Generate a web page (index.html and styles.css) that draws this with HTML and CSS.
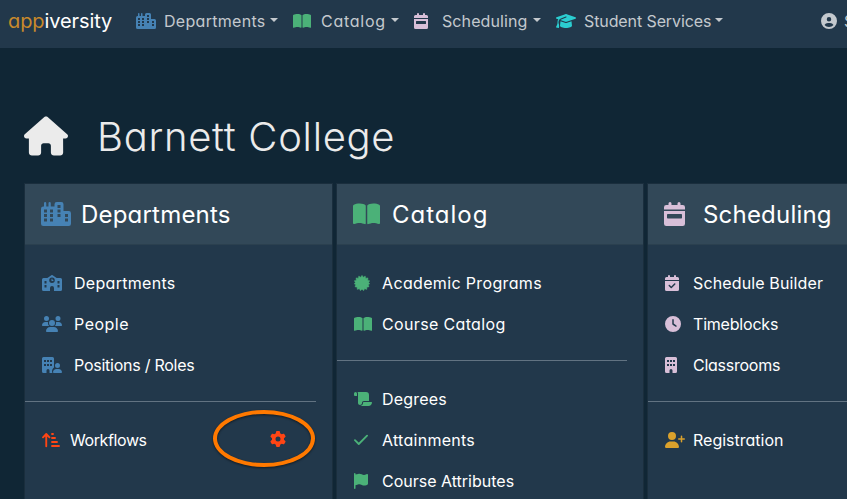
FILE: index.html
```html
<!DOCTYPE html>
<html lang="en">
<head>
<meta charset="utf-8">
<title>appiversity</title>
<link rel="stylesheet" href="styles.css">
</head>
<body>
<svg class="defs" aria-hidden="true">
  <symbol id="city" viewBox="0 0 640 512"><path fill-rule="evenodd" d="M64 24a24 24 0 0 1 48 0v72h48V24a24 24 0 0 1 48 0v72h80V48a48 48 0 0 1 48-48h96a48 48 0 0 1 48 48v144h112a48 48 0 0 1 48 48v224a48 48 0 0 1-48 48H48a48 48 0 0 1-48-48V144a48 48 0 0 1 48-48h16zM64 160v64h64v-64zM192 160v64h64v-64zM64 256v64h64v-64zM192 256v64h64v-64zM64 352v64h64v-64zM192 352v64h64v-64zM352 64v64h64V64zM352 160v64h64v-64zM352 256v64h64v-64zM512 256v64h64v-64zM512 352v64h64v-64z"/></symbol>
  <symbol id="book" viewBox="0 0 576 512"><path d="M249.6 471.5c10.8 3.8 22.4-4.1 22.4-15.5V78.6c0-4.2-1.6-8.4-5-11C247.4 52 202.4 32 144 32C93.5 32 46.3 45.3 18.1 56.1C6.8 60.5 0 71.7 0 83.8V454.1c0 11.9 12.8 20.2 24.1 16.5C55.6 460.1 105.5 448 144 448c33.9 0 79 14 105.6 23.5zm76.8 0C353 462 398.1 448 432 448c38.5 0 88.4 12.1 119.9 22.6c11.3 3.8 24.1-4.6 24.1-16.5V83.8c0-12.1-6.8-23.3-18.1-27.6C529.7 45.3 482.5 32 432 32c-58.4 0-103.4 20-123 35.6c-3.3 2.6-5 6.8-5 11V456c0 11.4 11.7 19.3 22.4 15.5z"/></symbol>
  <symbol id="calendar" viewBox="0 0 448 512"><path fill-rule="evenodd" d="M96 32a32 32 0 0 1 64 0v32h128V32a32 32 0 0 1 64 0v32h48a48 48 0 0 1 48 48v48H0v-48a48 48 0 0 1 48-48h48zM0 192h448v272a48 48 0 0 1-48 48H48a48 48 0 0 1-48-48zM80 256a16 16 0 0 0-16 16v64a16 16 0 0 0 16 16h288a16 16 0 0 0 16-16v-64a16 16 0 0 0-16-16z"/></symbol>
  <symbol id="calcheck" viewBox="0 0 448 512"><path fill-rule="evenodd" d="M96 32a32 32 0 0 1 64 0v32h128V32a32 32 0 0 1 64 0v32h48a48 48 0 0 1 48 48v48H0v-48a48 48 0 0 1 48-48h48zM0 192h448v272a48 48 0 0 1-48 48H48a48 48 0 0 1-48-48zM329 305c9.400-9.400 9.400-24.600 0-33.900s-24.600-9.400-33.900 0l-95 95-47-47c-9.400-9.400-24.600-9.400-33.900 0s-9.400 24.600 0 33.900l64 64c9.400 9.400 24.600 9.400 33.900 0z"/></symbol>
  <symbol id="grad" viewBox="0 0 640 512"><path d="M320 32c-8.100 0-16.100 1.400-23.700 4.100L15.800 137.400C6.300 140.900 0 149.900 0 160s6.300 19.100 15.800 22.600l57.900 20.900C57.300 229.300 48 259.800 48 291.900v28.100c0 28.400-10.800 57.700-22.300 80.800-6.500 13-13.900 25.800-22.500 37.600C0 442.700-.9 448.300.9 453.400s6 8.900 11.200 10.200l64 16c4.200 1.100 8.700.3 12.400-2s6.300-6.100 7.100-10.400c8.600-42.800 4.300-81.200-2.100-108.700C90.300 344.300 86 329.800 80 316.500v-24.600c0-30.200 10.200-58.700 27.900-81.500 12.900-15.500 29.600-28 49.200-35.700l157-61.700c8.200-3.200 17.500.8 20.700 9s-.8 17.500-9 20.700l-157 61.700c-12.400 4.900-23.300 12.400-32.200 21.600l159.600 57.600c7.600 2.700 15.600 4.100 23.700 4.100s16.100-1.400 23.700-4.100L624.200 182.600c9.500-3.400 15.800-12.500 15.800-22.600s-6.300-19.100-15.800-22.600L343.700 36.100C336.100 33.400 328.100 32 320 32zM128 408c0 35.300 86 72 192 72s192-36.700 192-72L496.700 262.600 354.500 314c-11.100 4-22.800 6-34.500 6s-23.500-2-34.500-6L143.300 262.600z"/></symbol>
  <symbol id="user" viewBox="0 0 512 512"><path fill-rule="evenodd" d="M399 384.200C376.900 345.800 335.400 320 288 320h-64c-47.400 0-88.900 25.800-111 64.200 35.200 39.200 86.200 63.800 143 63.800s107.800-24.700 143-63.800zM0 256a256 256 0 1 1 512 0 256 256 0 1 1-512 0zm256 16a72 72 0 1 0 0-144 72 72 0 1 0 0 144z"/></symbol>
  <symbol id="house" viewBox="0 0 576 512"><path d="M575.800 255.500c0 18-15 32.100-32 32.100h-32l.7 160.200V472c0 22.100-17.900 40-40 40H392c-22.100 0-40-17.900-40-40v-88c0-17.700-14.300-32-32-32h-64c-17.700 0-32 14.300-32 32v88c0 22.100-17.900 40-40 40h-80c-22.100 0-40-17.900-40-40V287.600H32c-18 0-32-14-32-32.100 0-9 3-17 10-24L266.400 8c7-7 15-8 22-8s15 2 21 7l255.400 224.500c8 7 12 15 11 24z"/></symbol>
  <symbol id="school" viewBox="0 0 640 512"><path fill-rule="evenodd" d="M320 0c8 0 14 2 20 6l129 90h123a48 48 0 0 1 48 48v320a48 48 0 0 1-48 48H384v-96a64 64 0 0 0-128 0v96H48a48 48 0 0 1-48-48V144a48 48 0 0 1 48-48h123L300 6c6-4 12-6 20-6zM80 192v80h64v-80zM80 320v80h64v-80zM496 192v80h64v-80zM496 320v80h64v-80zM320 80a88 88 0 1 0 0 176 88 88 0 1 0 0-176zM304 120h32v40h28v32h-60z"/></symbol>
  <symbol id="users" viewBox="0 0 640 512"><path d="M144 0a80 80 0 1 1 0 160 80 80 0 1 1 0-160zM512 0a80 80 0 1 1 0 160 80 80 0 1 1 0-160zM0 299c0-59 48-107 107-107h42c16 0 31 4 45 10-9 72 15 100 41 118H21c-12 0-21-9-21-21zM405 320c42-31 46-78 41-118 14-7 29-10 45-10h42c59 0 107 48 107 107 0 12-9 21-21 21zM320 128a96 96 0 1 1 0 192 96 96 0 1 1 0-192zM128 485c0-74 60-133 133-133h118c73 0 133 60 133 133 0 15-12 27-27 27H155c-15 0-27-12-27-27z"/></symbol>
  <symbol id="builduser" viewBox="0 0 640 512"><path fill-rule="evenodd" d="M48 0h288a48 48 0 0 1 48 48v288c-40 30-64 76-64 128 0 18 6 34 16 48h-96v-80a48 48 0 0 0-96 0v80H48a48 48 0 0 1-48-48V48A48 48 0 0 1 48 0zM64 96v64h64V96zM160 96v64h64V96zM256 96v64h64V96zM64 224v64h64v-64zM160 224v64h64v-64zM256 224v64h64v-64zM496 192a80 80 0 1 1 0 160 80 80 0 1 1 0-160zM352 485c0-58 48-101 107-101h74c59 0 107 43 107 101 0 15-12 27-27 27H379c-15 0-27-12-27-27z"/></symbol>
  <symbol id="sort" viewBox="0 0 576 512"><path d="M32 170L136 64l104 106M136 70v386M320 64h32M320 192h96M320 320h160M320 448h224" fill="none" stroke="currentColor" stroke-width="60" stroke-linecap="round" stroke-linejoin="round"/></symbol>
  <symbol id="gear" viewBox="0 0 512 512"><path fill-rule="evenodd" d="M495.900 166.600c3.200 8.700.5 18.400-6.400 24.600l-43.300 39.400c1.100 8.300 1.700 16.800 1.700 25.400s-.6 17.100-1.700 25.400l43.300 39.400c6.900 6.200 9.600 15.900 6.400 24.600-4.400 11.900-9.700 23.300-15.800 34.300l-4.700 8.100c-6.600 11-14 21.400-22.100 31.200-5.900 7.200-15.700 9.600-24.500 6.800l-55.700-17.700c-13.400 10.300-28.200 18.900-44 25.400l-12.500 57.100c-2 9.100-9 16.300-18.200 17.800-13.800 2.300-28 3.500-42.500 3.500s-28.700-1.200-42.500-3.500c-9.200-1.500-16.200-8.700-18.200-17.800l-12.500-57.100c-15.800-6.500-30.600-15.100-44-25.400L83.100 425.900c-8.800 2.800-18.600.3-24.500-6.800-8.100-9.800-15.500-20.200-22.100-31.200l-4.700-8.100c-6.100-11-11.400-22.400-15.800-34.300-3.200-8.700-.5-18.400 6.400-24.600l43.300-39.400C64.600 273.100 64 264.600 64 256s.6-17.100 1.700-25.400L22.400 191.200c-6.900-6.200-9.600-15.900-6.400-24.600 4.400-11.900 9.700-23.300 15.800-34.300l4.700-8.100c6.600-11 14-21.400 22.100-31.200 5.900-7.200 15.700-9.600 24.500-6.800l55.700 17.700c13.400-10.300 28.200-18.900 44-25.400l12.500-57.100c2-9.100 9-16.300 18.200-17.800C227.300 1.200 241.500 0 256 0s28.700 1.200 42.500 3.500c9.200 1.500 16.200 8.700 18.200 17.800l12.500 57.100c15.800 6.500 30.600 15.100 44 25.400l55.700-17.700c8.800-2.800 18.600-.3 24.500 6.800 8.100 9.800 15.500 20.200 22.100 31.200l4.700 8.100c6.100 11 11.400 22.400 15.800 34.300zM256 336a80 80 0 1 0 0-160 80 80 0 1 0 0 160z"/></symbol>
  <symbol id="seal" viewBox="0 0 512 512"><path d="M256 10l42 60 60-40 18 70 72-8-8 72 64 18-34 60 36 38-48 32 24 66-70 10-2 72-70-20-32 62-52-48-52 48-32-62-70 20-2-72-70-10 24-66-48-32 36-38-34-60 64-18-8-72 72 8 18-70 60 40z" stroke="currentColor" stroke-width="14" stroke-linejoin="round"/></symbol>
  <symbol id="scroll" viewBox="0 0 576 512"><path d="M0 80v48a32 32 0 0 0 32 32h64V80a48 48 0 1 0-96 0zM112 32c10 13 16 30 16 48v304c0 35 29 64 64 64s64-29 64-64v-5a59 59 0 0 1 59-59h165V128a96 96 0 0 0-96-96zM464 480c62 0 112-50 112-112a16 16 0 0 0-16-16H315a27 27 0 0 0-27 27v5c0 53-43 96-96 96z"/></symbol>
  <symbol id="check" viewBox="0 0 448 512"><path d="M30 262l122 122L418 118" fill="none" stroke="currentColor" stroke-width="58" stroke-linecap="round" stroke-linejoin="round"/></symbol>
  <symbol id="flag" viewBox="0 0 448 512"><path d="M48 24a24 24 0 0 0-48 0v464a24 24 0 0 0 48 0V388l80-20c41-10 85-5 123 13 44 22 95 25 142 7l35-13c12-5 20-16 20-30V66c0-23-24-38-45-28l-10 5c-46 23-101 23-147 0-35-18-75-22-113-13L48 48z"/></symbol>
  <symbol id="clock" viewBox="0 0 512 512"><path fill-rule="evenodd" d="M256 0a256 256 0 1 1 0 512 256 256 0 1 1 0-512zM232 120v136c0 8 4 15.500 10.700 20l96 64c11 7.400 25.900 4.400 33.300-6.700s4.400-25.900-6.700-33.300L280 243.200V120a24 24 0 0 0-48 0z"/></symbol>
  <symbol id="building" viewBox="0 0 384 512"><path fill-rule="evenodd" d="M48 0h288a48 48 0 0 1 48 48v416a48 48 0 0 1-48 48h-96v-80a48 48 0 0 0-96 0v80H48a48 48 0 0 1-48-48V48A48 48 0 0 1 48 0zM64 96v64h64V96zM160 96v64h64V96zM256 96v64h64V96zM64 224v64h64v-64zM160 224v64h64v-64zM256 224v64h64v-64z"/></symbol>
  <symbol id="userplus" viewBox="0 0 640 512"><path d="M224 0a128 128 0 1 1 0 256 128 128 0 1 1 0-256zM0 482c0-98 80-178 178-178h92c98 0 178 80 178 178 0 17-13 30-30 30H30c-17 0-30-13-30-30zM504 312v-64h-64a24 24 0 0 1 0-48h64v-64a24 24 0 0 1 48 0v64h64a24 24 0 0 1 0 48h-64v64a24 24 0 0 1-48 0z"/></symbol>
</svg>

<nav class="navbar">
  <a class="brand"><span>app</span>iversity</a>
  <a class="nav-item nav-dept"><svg class="icon w20 blue"><use href="#city"/></svg><span class="label">Departments</span><i class="caret"></i></a>
  <a class="nav-item nav-cat"><svg class="icon w18 green"><use href="#book"/></svg><span class="label">Catalog</span><i class="caret"></i></a>
  <a class="nav-item nav-sched"><svg class="icon w14 pink"><use href="#calendar"/></svg><span class="label">Scheduling</span><i class="caret"></i></a>
  <a class="nav-item nav-stud"><svg class="icon w20 cyan"><use href="#grad"/></svg><span class="label">Student Services</span><i class="caret"></i></a>
  <a class="nav-item nav-user"><svg class="icon w16"><use href="#user"/></svg><span class="label">S</span></a>
</nav>

<main>
  <h1><svg class="house"><use href="#house"/></svg><span>Barnett College</span></h1>
  <div class="cards">
    <section class="card">
      <h2><svg class="head-icon w30 blue"><use href="#city"/></svg><span class="t-dept">Departments</span></h2>
      <div class="card-body">
        <a class="row"><span class="slot"><svg class="icon w20 blue"><use href="#school"/></svg></span><span class="r-dept">Departments</span></a>
        <a class="row"><span class="slot"><svg class="icon w20 blue"><use href="#users"/></svg></span><span class="r-people">People</span></a>
        <a class="row"><span class="slot"><svg class="icon w20 blue"><use href="#builduser"/></svg></span><span class="r-pos">Positions / Roles</span></a>
        <hr>
        <a class="row workflows"><span class="slot"><svg class="icon w18 red"><use href="#sort"/></svg></span><span class="r-work">Workflows</span>
          <span class="settings"><svg class="icon w16 red"><use href="#gear"/></svg><i class="ring"></i></span></a>
      </div>
    </section>
    <section class="card catalog">
      <h2><svg class="head-icon w27 green"><use href="#book"/></svg><span class="t-cat">Catalog</span></h2>
      <div class="card-body">
        <a class="row"><span class="slot"><svg class="icon w16 green"><use href="#seal"/></svg></span><span class="r-acad">Academic Programs</span></a>
        <a class="row"><span class="slot"><svg class="icon w18 green"><use href="#book"/></svg></span><span class="r-course">Course Catalog</span></a>
        <hr>
        <a class="row"><span class="slot"><svg class="icon w18 green"><use href="#scroll"/></svg></span><span class="r-deg">Degrees</span></a>
        <a class="row"><span class="slot"><svg class="icon w14 green"><use href="#check"/></svg></span><span class="r-att">Attainments</span></a>
        <a class="row"><span class="slot"><svg class="icon w14 green"><use href="#flag"/></svg></span><span class="r-attr">Course Attributes</span></a>
      </div>
    </section>
    <section class="card scheduling">
      <h2><svg class="head-icon w21 pink"><use href="#calendar"/></svg><span class="t-sched">Scheduling</span></h2>
      <div class="card-body">
        <a class="row"><span class="slot"><svg class="icon w14 pink"><use href="#calcheck"/></svg></span><span class="r-build">Schedule Builder</span></a>
        <a class="row"><span class="slot"><svg class="icon w16 pink"><use href="#clock"/></svg></span><span class="r-time">Timeblocks</span></a>
        <a class="row"><span class="slot"><svg class="icon w12 pink"><use href="#building"/></svg></span><span class="r-class">Classrooms</span></a>
        <hr>
        <a class="row"><span class="slot"><svg class="icon w20 gold"><use href="#userplus"/></svg></span><span class="r-reg">Registration</span></a>
      </div>
    </section>
  </div>
</main>
</body>
</html>
```
FILE: styles.css
```css
* { box-sizing: border-box; }
html, body { height: 100%; }
body {
  margin: 0;
  overflow: hidden;
  background: #102635;
  color: #fff;
  font: 400 16px/24px "Century Gothic", Inter, "Open Sans", sans-serif;
  font-feature-settings: "cv11" 1;
  white-space: nowrap;
}
.defs { display: none; }
svg { fill: currentColor; flex: none; display: block; }
.icon { height: 16px; }
.head-icon { height: 24px; }
.w12 { width: 12px; } .w14 { width: 14px; } .w16 { width: 16px; }
.w18 { width: 18px; } .w20 { width: 20px; } .w21 { width: 21px; }
.w27 { width: 27px; } .w30 { width: 30px; }
.blue { color: #4682b4; }
.green { color: #4bb178; }
.pink { color: #d8bfd8; }
.cyan { color: #2bcdd0; }
.red { color: #ff4514; }
.gold { color: #daa12c; }

.navbar {
  display: flex;
  align-items: center;
  height: 48px;
  padding: 0 0 6px 8px;
  overflow: hidden;
  background: #22384b;
  color: #c4c9ce;
}
.brand { flex: none; width: 128px; font-size: 20px; letter-spacing: -.1px; color: #fff; }
.brand span { color: #c98a2b; }
.nav-item { display: flex; align-items: center; flex: none; }
.nav-item .label { margin-left: 8px; }
.nav-dept { width: 157px; }
.nav-dept .label { width: 106px; letter-spacing: .3px; }
.nav-cat { width: 121px; }
.nav-cat .label { width: 70px; margin-left: 10px; letter-spacing: .75px; }
.nav-sched { width: 142px; }
.nav-sched .label { width: 91px; margin-left: 14px; letter-spacing: .1px; }
.nav-stud { width: 265px; }
.nav-stud .label { width: 131px; letter-spacing: -.1px; }
.nav-user .label { margin-left: 7px; }
.caret {
  border: 4px solid transparent;
  border-top-color: currentColor;
  border-bottom: 0;
  margin-top: -2px;
}

main { padding-left: 24px; }
h1 {
  display: flex;
  align-items: center;
  height: 48px;
  margin: 64px 0 23px;
  font-size: 40px;
  font-weight: 300;
  line-height: 48px;
  letter-spacing: .7px;
  color: #ebebeb;
}
h1 span { padding-top: 2px; }
.house { width: 44px; height: 40px; margin-right: 29px; }
.cards { display: grid; grid-template-columns: 309px 308px 308px; gap: 3px; }
.card {
  height: 330px;
  border: 1px solid #1a2e3d;
  background: #22384b;
}
.scheduling { width: 200px; border-right: 0; }
h2 {
  display: flex;
  align-items: center;
  height: 61px;
  margin: 0;
  padding: 0 0 1px 16px;
  border-bottom: 1px solid #2b404f;
  background: #324858;
  font-size: 24px;
  font-weight: 400;
}
h2 span { margin-left: 10px; padding-top: 2px; }
.catalog h2 span { margin-left: 12px; }
.scheduling h2 span { margin-left: 18px; }
.card-body { padding-top: 17px; }
.row { display: flex; align-items: center; height: 41px; padding-left: 17px; }
.slot { width: 32px; }
.catalog .slot { width: 28px; }
.scheduling .slot { width: 28px; }
.workflows .slot { width: 28px; }
hr {
  width: 291px;
  height: 1px;
  margin: 16px 0 17px;
  border: 0;
  background: #627382;
}
.catalog hr { width: 290px; }
.scheduling hr { width: 100%; }
.settings { position: relative; margin: -2px 46px 0 auto; }
.ring {
  position: absolute;
  left: -57px;
  top: -21px;
  width: 102px;
  height: 57px;
  border: 4px solid #ff7900;
  border-radius: 50%;
  filter: drop-shadow(0 1px 1px #0008);
}

/* Tracking per label */
.t-dept, .t-sched { letter-spacing: .2px; }
.t-cat { letter-spacing: 1px; }
.r-dept { letter-spacing: .3px; }
.r-people { letter-spacing: .5px; }
.r-pos { letter-spacing: -.25px; }
.r-work { letter-spacing: -.4px; }
.r-acad, .r-course { letter-spacing: .35px; }
.r-deg { letter-spacing: .2px; }
.r-att { letter-spacing: .27px; }
.r-build { letter-spacing: .13px; }
.r-time { letter-spacing: -.2px; }
.r-class { letter-spacing: -.25px; }
```
